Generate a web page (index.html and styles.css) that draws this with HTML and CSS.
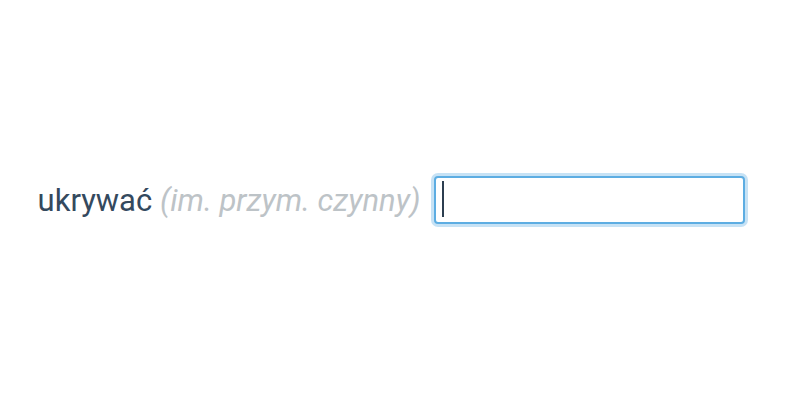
FILE: index.html
```html
<!DOCTYPE html>
<html lang="pl">
<head>
  <meta charset="UTF-8">
  <title>ukrywać</title>
  <link rel="stylesheet" href="styles.css">
</head>
<body>
  <div class="page">
    <div class="question">
      <span class="label">
        <span class="word">ukrywać</span>
        <span class="hint">(im. przym. czynny)</span>
      </span>
      <span class="field">
        <input class="answer" type="text" autofocus>
        <span class="caret"></span>
      </span>
    </div>
  </div>
</body>
</html>
```

FILE: styles.css
```css
body {
  margin: 0;
  font-family: Roboto, "Liberation Sans", sans-serif;
  background-color: #fff;
  color: #2c3e50;
}
.page {
  height: 400px;
  display: flex;
  align-items: center;
  justify-content: center;
}
.question {
  display: flex;
  align-items: center;
  gap: 14px;
  font-size: 31px;
  margin-left: -17px;
}
.word {
  color: #34495e;
}
.hint {
  color: #bdc3c7;
  font-style: italic;
}
.field {
  position: relative;
  display: block;
}
.answer {
  display: block;
  width: 311px;
  height: 48px;
  box-sizing: border-box;
  border: 2px solid #5dade2;
  border-radius: 4px;
  box-shadow: 0 0 0 3px rgba(93, 173, 226, 0.35);
  outline: none;
  font-family: inherit;
  font-size: 28px;
  padding: 0 6px;
  color: #2c3e50;
  caret-color: transparent;
}
.caret {
  position: absolute;
  left: 8px;
  top: 5px;
  width: 2px;
  height: 36px;
  background-color: #2c3e50;
}
```
